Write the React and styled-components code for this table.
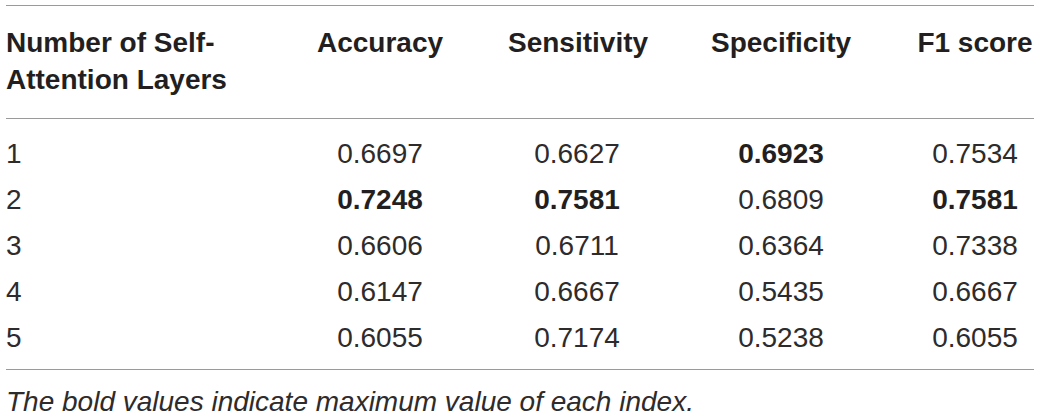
import React from "react";
import styled, { createGlobalStyle } from "styled-components";

const GlobalStyle = createGlobalStyle`
  body {
    margin: 0;
    background: #ffffff;
    font-family: "Liberation Sans", Arial, sans-serif;
    color: #231f20;
  }
`;

const Page = styled.div`
  width: 1028px;
  padding: 5px 6px 0 6px;
`;

const Table = styled.div`
  display: grid;
  grid-template-columns: 246px 256px 138px 270px 118px;
  border-top: 1px solid #9a9a9a;
  border-bottom: 1px solid #9a9a9a;
`;

const HeadCell = styled.div`
  font-size: 28px;
  font-weight: 700;
  line-height: 37px;
  padding: 18px 0 20px 0;
  border-bottom: 1px solid #9a9a9a;
  white-space: nowrap;
  text-align: ${(p) => (p.$left ? "left" : "center")};
`;

const Cell = styled.div`
  font-size: 28px;
  font-weight: ${(p) => (p.$bold ? 700 : 400)};
  color: ${(p) => (p.$bold ? "#231f20" : "#2e2b2c")};
  line-height: 46px;
  white-space: nowrap;
  text-align: ${(p) => (p.$left ? "left" : "center")};
  padding-top: ${(p) => (p.$first ? "12px" : "0")};
  padding-bottom: ${(p) => (p.$last ? "8px" : "0")};
`;

const Caption = styled.p`
  margin: 16px 0 0 0;
  font-size: 28px;
  font-style: italic;
  line-height: 32px;
  color: #2e2b2c;
`;

const headers = ["Accuracy", "Sensitivity", "Specificity", "F1 score"];

const rows = [
  { n: "1", values: ["0.6697", "0.6627", "0.6923", "0.7534"], bold: [2] },
  { n: "2", values: ["0.7248", "0.7581", "0.6809", "0.7581"], bold: [0, 1, 3] },
  { n: "3", values: ["0.6606", "0.6711", "0.6364", "0.7338"], bold: [] },
  { n: "4", values: ["0.6147", "0.6667", "0.5435", "0.6667"], bold: [] },
  { n: "5", values: ["0.6055", "0.7174", "0.5238", "0.6055"], bold: [] },
];

export default function App() {
  return (
    <Page>
      <GlobalStyle />
      <Table>
        <HeadCell $left>
          Number of Self-
          <br />
          Attention Layers
        </HeadCell>
        {headers.map((h) => (
          <HeadCell key={h}>{h}</HeadCell>
        ))}
        {rows.map((row, i) => {
          const first = i === 0;
          const last = i === rows.length - 1;
          return (
            <React.Fragment key={row.n}>
              <Cell $left $first={first} $last={last}>
                {row.n}
              </Cell>
              {row.values.map((v, j) => (
                <Cell
                  key={j}
                  $bold={row.bold.includes(j)}
                  $first={first}
                  $last={last}
                >
                  {v}
                </Cell>
              ))}
            </React.Fragment>
          );
        })}
      </Table>
      <Caption>The bold values indicate maximum value of each index.</Caption>
    </Page>
  );
}
